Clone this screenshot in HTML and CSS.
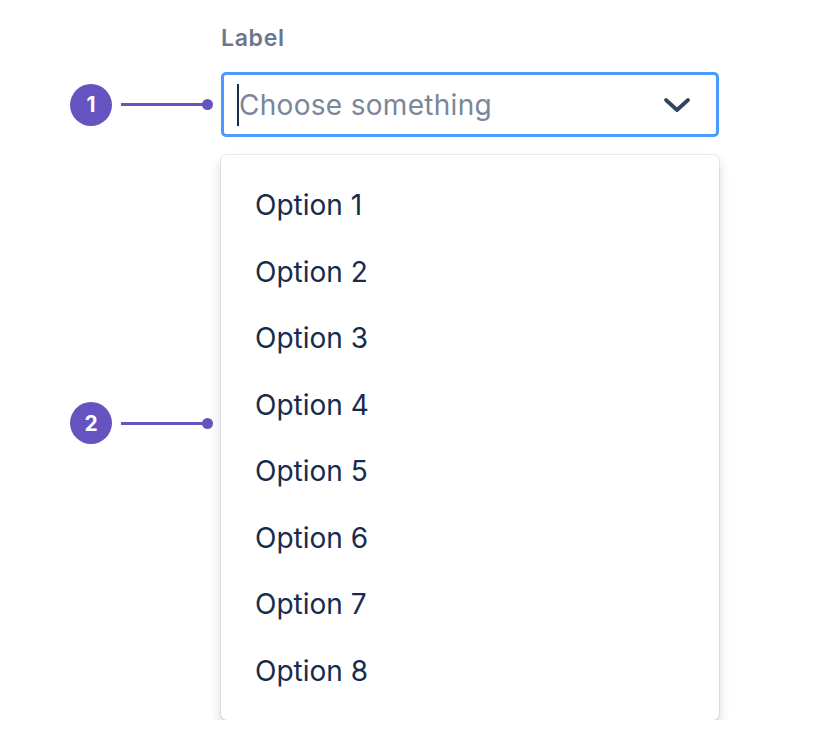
FILE: index.html
```html
<!DOCTYPE html>
<html lang="en">
<head>
<meta charset="utf-8">
<title>Select</title>
<link rel="stylesheet" href="styles.css">
</head>
<body>
<div class="wrap">
  <div class="label">Label</div>

  <div class="anno anno-1">
    <span class="badge">1</span>
    <span class="leader"></span>
  </div>
  <div class="control">
    <span class="caret"></span>
    <span class="placeholder">Choose something</span>
    <svg class="chevron" width="28" height="16" viewBox="0 0 28 16">
      <path d="M3 3 L14 13 L25 3" fill="none" stroke="#344563" stroke-width="3.8" stroke-linecap="round" stroke-linejoin="round"/>
    </svg>
  </div>

  <div class="anno anno-2">
    <span class="badge">2</span>
    <span class="leader"></span>
  </div>
  <ul class="menu">
    <li class="option">Option 1</li>
    <li class="option">Option 2</li>
    <li class="option">Option 3</li>
    <li class="option">Option 4</li>
    <li class="option">Option 5</li>
    <li class="option">Option 6</li>
    <li class="option">Option 7</li>
    <li class="option">Option 8</li>
  </ul>
</div>
</body>
</html>
```

FILE: styles.css
```css
html, body {
  margin: 0;
  padding: 0;
  background: #ffffff;
}

body {
  font-family: Inter, "Noto Sans", "Liberation Sans", sans-serif;
  color: #172B4D;
}

.wrap {
  display: grid;
  grid-template-columns: 221px 498px;
  padding-top: 25px;
}

.label {
  grid-column: 2;
  font-size: 23px;
  line-height: 26px;
  font-weight: 600;
  letter-spacing: 0.7px;
  color: #6B778C;
  margin-bottom: 21px;
}

.anno {
  grid-column: 1;
  display: flex;
  align-items: center;
  padding-left: 70px;
}

.anno-1 {
  align-self: center;
}

.anno-2 {
  align-self: start;
  margin-top: 265px;
}

.badge {
  width: 42px;
  height: 42px;
  border-radius: 50%;
  background: #6554C0;
  color: #ffffff;
  font-size: 21px;
  font-weight: 700;
  display: flex;
  align-items: center;
  justify-content: center;
  flex: none;
}

.leader {
  position: relative;
  width: 87px;
  height: 3px;
  margin-left: 9px;
  background: #6554C0;
}

.leader::after {
  content: "";
  position: absolute;
  right: -5px;
  top: -4px;
  width: 11px;
  height: 11px;
  border-radius: 50%;
  background: #6554C0;
}

.control {
  grid-column: 2;
  box-sizing: border-box;
  height: 65px;
  border: 3px solid #4C9AFF;
  border-radius: 5px;
  display: flex;
  align-items: center;
  padding-left: 13px;
  padding-right: 25px;
}

.caret {
  width: 2px;
  height: 42px;
  background: #172B4D;
  flex: none;
}

.placeholder {
  flex: 1;
  font-size: 28px;
  letter-spacing: 0.3px;
  color: #7A869A;
}

.chevron {
  flex: none;
}

.menu {
  grid-column: 2;
  list-style: none;
  margin: 18px 0 0 0;
  padding: 17px 0 16px;
  border-radius: 6px;
  background: #ffffff;
  box-shadow: 0 0 0 1px rgba(9, 30, 66, 0.08), 0 6px 12px rgba(9, 30, 66, 0.18);
}

.option {
  height: 66.5px;
  display: flex;
  align-items: center;
  padding-left: 34px;
  font-size: 28px;
  color: #172B4D;
}
```
